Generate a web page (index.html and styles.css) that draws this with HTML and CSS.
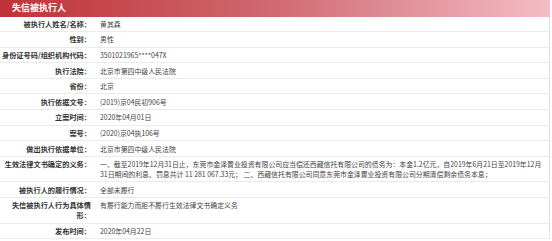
FILE: index.html
```html
<!DOCTYPE html>
<html lang="zh">
<head>
<meta charset="utf-8">
<title>失信被执行人</title>
<link rel="stylesheet" href="styles.css">
</head>
<body>
<div class="panel">
  <div class="header">失信被执行人</div>
  <div class="table">
    <div class="row"><div class="label">被执行人姓名/名称：</div><div class="value">黄其森</div></div>
    <div class="row"><div class="label">性别：</div><div class="value">男性</div></div>
    <div class="row"><div class="label">身份证号码/组织机构代码：</div><div class="value">3501021965****047X</div></div>
    <div class="row"><div class="label">执行法院：</div><div class="value">北京市第四中级人民法院</div></div>
    <div class="row"><div class="label">省份：</div><div class="value">北京</div></div>
    <div class="row"><div class="label">执行依据文号：</div><div class="value">(2019)京04民初906号</div></div>
    <div class="row"><div class="label">立案时间：</div><div class="value">2020年04月01日</div></div>
    <div class="row"><div class="label">案号：</div><div class="value">(2020)京04执106号</div></div>
    <div class="row"><div class="label">做出执行依据单位：</div><div class="value">北京市第四中级人民法院</div></div>
    <div class="row"><div class="label">生效法律文书确定的义务：</div><div class="value">一、截至2019年12月31日止，东莞市金泽置业投资有限公司应当偿还西藏信托有限公司的债务为：本金1.2亿元，自2019年6月21日至2019年12月31日期间的利息、罚息共计 11 281 067.33元； 二、西藏信托有限公司同意东莞市金泽置业投资有限公司分期清偿剩余债务本息；</div></div>
    <div class="row"><div class="label">被执行人的履行情况：</div><div class="value">全部未履行</div></div>
    <div class="row"><div class="label">失信被执行人行为具体情<br>形：</div><div class="value">有履行能力而拒不履行生效法律文书确定义务</div></div>
    <div class="row"><div class="label">发布时间：</div><div class="value">2020年04月22日</div></div>
  </div>
</div>
</body>
</html>
```

FILE: styles.css
```css
html, body {
  margin: 0;
  padding: 0;
  background: #ffffff;
}

body {
  font-family: "Noto Sans CJK SC", "Noto Sans", sans-serif;
  color: #333333;
}

.panel {
  width: 550px;
}

.header {
  height: 16.5px;
  line-height: 16.5px;
  padding-left: 12px;
  font-size: 9px;
  font-weight: bold;
  color: #ffffff;
  background: linear-gradient(to right, #bf3237 0%, #d06a71 50%, #f4bcc4 100%);
}

.table {
  border-right: 1px solid #e2e2e2;
}

.row {
  display: flex;
  border-bottom: 1px solid #ebebeb;
}

.label {
  flex: none;
  width: 91px;
  text-align: right;
  font-size: 7.2px;
  font-weight: bold;
  line-height: 10px;
  padding: 2.3px 1.5px 2.3px 0;
  color: #333333;
}

.value {
  flex: 1;
  min-width: 0;
  font-size: 6.9px;
  line-height: 10px;
  padding: 2.3px 3px 2.3px 7.5px;
  color: #444444;
}
```
